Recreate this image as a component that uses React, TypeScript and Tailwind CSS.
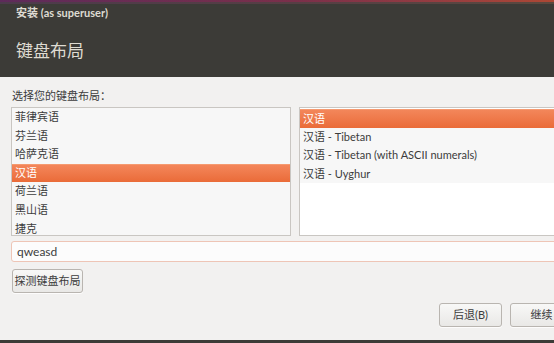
import React from 'react';

const leftItems = ['菲律宾语', '芬兰语', '哈萨克语', '汉语', '荷兰语', '黑山语', '捷克'];
const rightItems = ['汉语', '汉语 - Tibetan', '汉语 - Tibetan (with ASCII numerals)', '汉语 - Uyghur'];

const font = { fontFamily: 'Lato, "Noto Sans CJK SC", sans-serif' };

const Row = ({ label, selected }: { label: string; selected?: boolean }) => (
  <div
    className={
      selected
        ? 'h-[18.6px] flex items-center px-[3px] text-white bg-gradient-to-b from-[#f3865a] to-[#ea6b38] border-t border-[#f59a70]'
        : 'h-[18.6px] flex items-center px-[3px] text-[#3c3c3c] bg-[#f7f7f7]'
    }
  >
    {label}
  </div>
);

const Button = ({ children, className }: { children: React.ReactNode; className?: string }) => (
  <button
    className={
      'h-[24px] whitespace-nowrap rounded-[3px] border border-[#b9b5b0] bg-gradient-to-b from-[#f8f8f7] to-[#e9e8e6] text-[11px] text-[#3c3c3c] shadow-[0_1px_0_rgba(255,255,255,0.8)] ' +
      (className || '')
    }
  >
    {children}
  </button>
);

export default function App() {
  return (
    <div className="w-[554px] h-[343px] overflow-hidden bg-[#f2f1f0] text-[11px]" style={font}>
      <div className="w-[590px] h-full flex flex-col">
        {/* header */}
        <div className="h-[77px] bg-[#3c3b37] flex flex-col">
          <div className="h-[2px] bg-gradient-to-r from-[#5e2a5a] via-[#7a2f4a] to-[#b44a2e]" />
          <div className="h-[2px] bg-gradient-to-r from-[#4d3a4c] via-[#563e44] to-[#5a4a3e]" />
          <div className="pl-[16px] pt-[1px] text-[11px] font-bold text-[#dfdbd2] leading-[15px]">安装 (as superuser)</div>
          <div className="pl-[16px] pt-[20px] text-[17px] text-[#dfdbd2] leading-[22px]">键盘布局</div>
        </div>

        {/* body */}
        <div className="flex-1 flex flex-col pl-[11px]">
          <div className="pt-[11px] pl-[1px] h-[30px] leading-[16px] text-[#3c3c3c]">选择您的键盘布局：</div>

          <div className="flex gap-[8px]">
            <div className="w-[280px] h-[129px] border border-[#c9c6c2] bg-white overflow-hidden">
              {leftItems.map((it) => (
                <Row key={it} label={it} selected={it === '汉语'} />
              ))}
            </div>
            <div className="w-[283px] h-[129px] border border-[#c9c6c2] bg-white overflow-hidden pt-[1px]">
              {rightItems.map((it, i) => (
                <Row key={it} label={it} selected={i === 0} />
              ))}
            </div>
          </div>

          <div className="mt-[5px] w-[572px] h-[21px] border border-[#eec5b6] rounded-[3px] bg-[#fcfcfc] flex items-center px-[5px] text-[12px] text-[#3c3c3c]">
            qweasd
          </div>

          <div className="mt-[7px] pl-[1px]">
            <Button className="w-[71px]">探测键盘布局</Button>
          </div>

          <div className="mt-[10px] flex justify-end gap-[8px] pr-[17px]">
            <Button className="w-[63px]">后退(B)</Button>
            <Button className="w-[63px]">继续</Button>
          </div>
        </div>
        <div className="h-[3px] bg-[#3c3b37]" />
      </div>
    </div>
  );
}
